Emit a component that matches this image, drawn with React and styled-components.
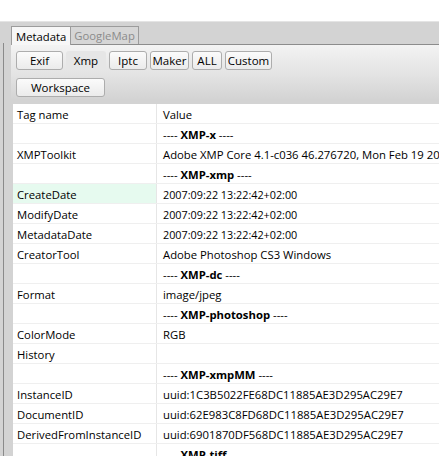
import React from "react";
import styled, { createGlobalStyle } from "styled-components";

const Global = createGlobalStyle`
  html, body {
    margin: 0;
    padding: 0;
    background: #ffffff;
    font-family: "Open Sans", "Noto Sans", "Liberation Sans", sans-serif;
    font-size: 11.3px;
    color: #000;
  }
  #root { height: 456px; overflow: hidden; }
`;

const Page = styled.div`
  width: 439px;
  height: 456px;
  display: flex;
  flex-direction: column;
  overflow: hidden;
`;

const TopStrip = styled.div`
  height: 21px;
  background: #ffffff;
  border-bottom: 1px solid #e4e4e4;
`;

const Body = styled.div`
  flex: 1;
  display: flex;
  background: #d3d3d3;
  min-height: 0;
`;

const Gutter = styled.div`
  width: 11px;
  padding-top: 21px;
  display: flex;
`;

const GutterLine = styled.div`
  margin-left: 3px;
  width: 1px;
  background: #8a8a8a;
`;

const TabWidget = styled.div`
  flex: 1;
  display: flex;
  flex-direction: column;
  min-width: 0;
`;

const TabBar = styled.div`
  height: 22px;
  padding-top: 3px;
  box-sizing: border-box;
  display: flex;
  align-items: flex-end;
`;

const Tab = styled.div`
  height: ${(p) => (p.$active ? "19px" : "18px")};
  padding: 0 ${(p) => (p.$active ? "4px" : "3px")};
  box-sizing: border-box;
  display: flex;
  align-items: center;
  border: 1px solid #9c9c9c;
  border-bottom: none;
  background: ${(p) => (p.$active ? "#f7f7f7" : "#d6d6d6")};
  color: ${(p) => (p.$active ? "#000" : "#8b8b8b")};
  margin-bottom: ${(p) => (p.$active ? "-1px" : "0")};
  position: relative;
  z-index: ${(p) => (p.$active ? 1 : 0)};
  ${(p) => (!p.$active ? "border-left: none;" : "")}
`;

const Pane = styled.div`
  flex: 1;
  border-top: 1px solid #8c8c8c;
  background: linear-gradient(#f3f3f3 0px, #e3e3e3 30px, #d3d3d3 55px, #d3d3d3);
  padding: 6px 0 0 2px;
  display: flex;
  flex-direction: column;
  min-height: 0;
`;

const ButtonRow = styled.div`
  display: flex;
  gap: 3px;
  padding-left: 3px;
  margin-bottom: ${(p) => p.$mb || "0"};
`;

const Button = styled.div`
  width: ${(p) => p.$w}px;
  height: 19px;
  box-sizing: border-box;
  display: flex;
  align-items: center;
  justify-content: center;
  border-radius: 3px;
  border: 1px solid ${(p) => (p.$flat ? "transparent" : "#adadad")};
  background: ${(p) =>
    p.$flat ? "#e6e6e6" : "linear-gradient(#fbfbfb, #ebebeb)"};
  font-size: 11.5px;
`;

const Table = styled.div`
  flex: 1;
  background: #ffffff;
  overflow: hidden;
`;

const Row = styled.div`
  display: grid;
  grid-template-columns: 144px 1fr;
  height: 20px;
  border-bottom: 1px solid #efefef;
  box-sizing: border-box;
`;

const Cell = styled.div`
  display: flex;
  align-items: center;
  padding-left: ${(p) => (p.$first ? "4px" : "6px")};
  padding-top: 1px;
  border-right: ${(p) => (p.$first ? "1px solid #e6e6e6" : "none")};
  background: ${(p) => p.$bg || "transparent"};
  white-space: nowrap;
  overflow: hidden;
  font-size: ${(p) => (p.$small ? "10.8px" : "11.3px")};
`;

const Section = styled.span`
  b { font-weight: 700; }
`;

const rows = [
  ["", "XMP-x", true],
  ["XMPToolkit", "Adobe XMP Core 4.1-c036 46.276720, Mon Feb 19 2007 22:40:08"],
  ["", "XMP-xmp", true],
  ["CreateDate", "2007:09:22 13:22:42+02:00", false, true],
  ["ModifyDate", "2007:09:22 13:22:42+02:00"],
  ["MetadataDate", "2007:09:22 13:22:42+02:00"],
  ["CreatorTool", "Adobe Photoshop CS3 Windows"],
  ["", "XMP-dc", true],
  ["Format", "image/jpeg"],
  ["", "XMP-photoshop", true],
  ["ColorMode", "RGB"],
  ["History", ""],
  ["", "XMP-xmpMM", true],
  ["InstanceID", "uuid:1C3B5022FE68DC11885AE3D295AC29E7"],
  ["DocumentID", "uuid:62E983C8FD68DC11885AE3D295AC29E7"],
  ["DerivedFromInstanceID", "uuid:6901870DF568DC11885AE3D295AC29E7"],
  ["", "XMP-tiff", true],
];

const buttons = [
  ["Exif", 47],
  ["Xmp", 40, true],
  ["Iptc", 38],
  ["Maker", 39],
  ["ALL", 30],
  ["Custom", 47],
];

export default function App() {
  return (
    <Page>
      <Global />
      <TopStrip />
      <Body>
        <Gutter>
          <GutterLine />
        </Gutter>
        <TabWidget>
          <TabBar>
            <Tab $active>Metadata</Tab>
            <Tab>GoogleMap</Tab>
          </TabBar>
          <Pane>
            <ButtonRow $mb="8px">
              {buttons.map(([label, w, flat]) => (
                <Button key={label} $w={w} $flat={flat}>
                  {label}
                </Button>
              ))}
            </ButtonRow>
            <ButtonRow $mb="7px">
              <Button $w={89}>Workspace</Button>
            </ButtonRow>
            <Table>
              <Row>
                <Cell $first>Tag name</Cell>
                <Cell>Value</Cell>
              </Row>
              {rows.map(([tag, value, section, hl], i) => (
                <Row key={i}>
                  <Cell $first $bg={hl ? "#e6faef" : undefined}>
                    {tag}
                  </Cell>
                  <Cell $small={!section && /^\d/.test(value)}>
                    {section ? (
                      <Section>
                        ---- <b>{value}</b> ----
                      </Section>
                    ) : (
                      value
                    )}
                  </Cell>
                </Row>
              ))}
            </Table>
          </Pane>
        </TabWidget>
      </Body>
    </Page>
  );
}
